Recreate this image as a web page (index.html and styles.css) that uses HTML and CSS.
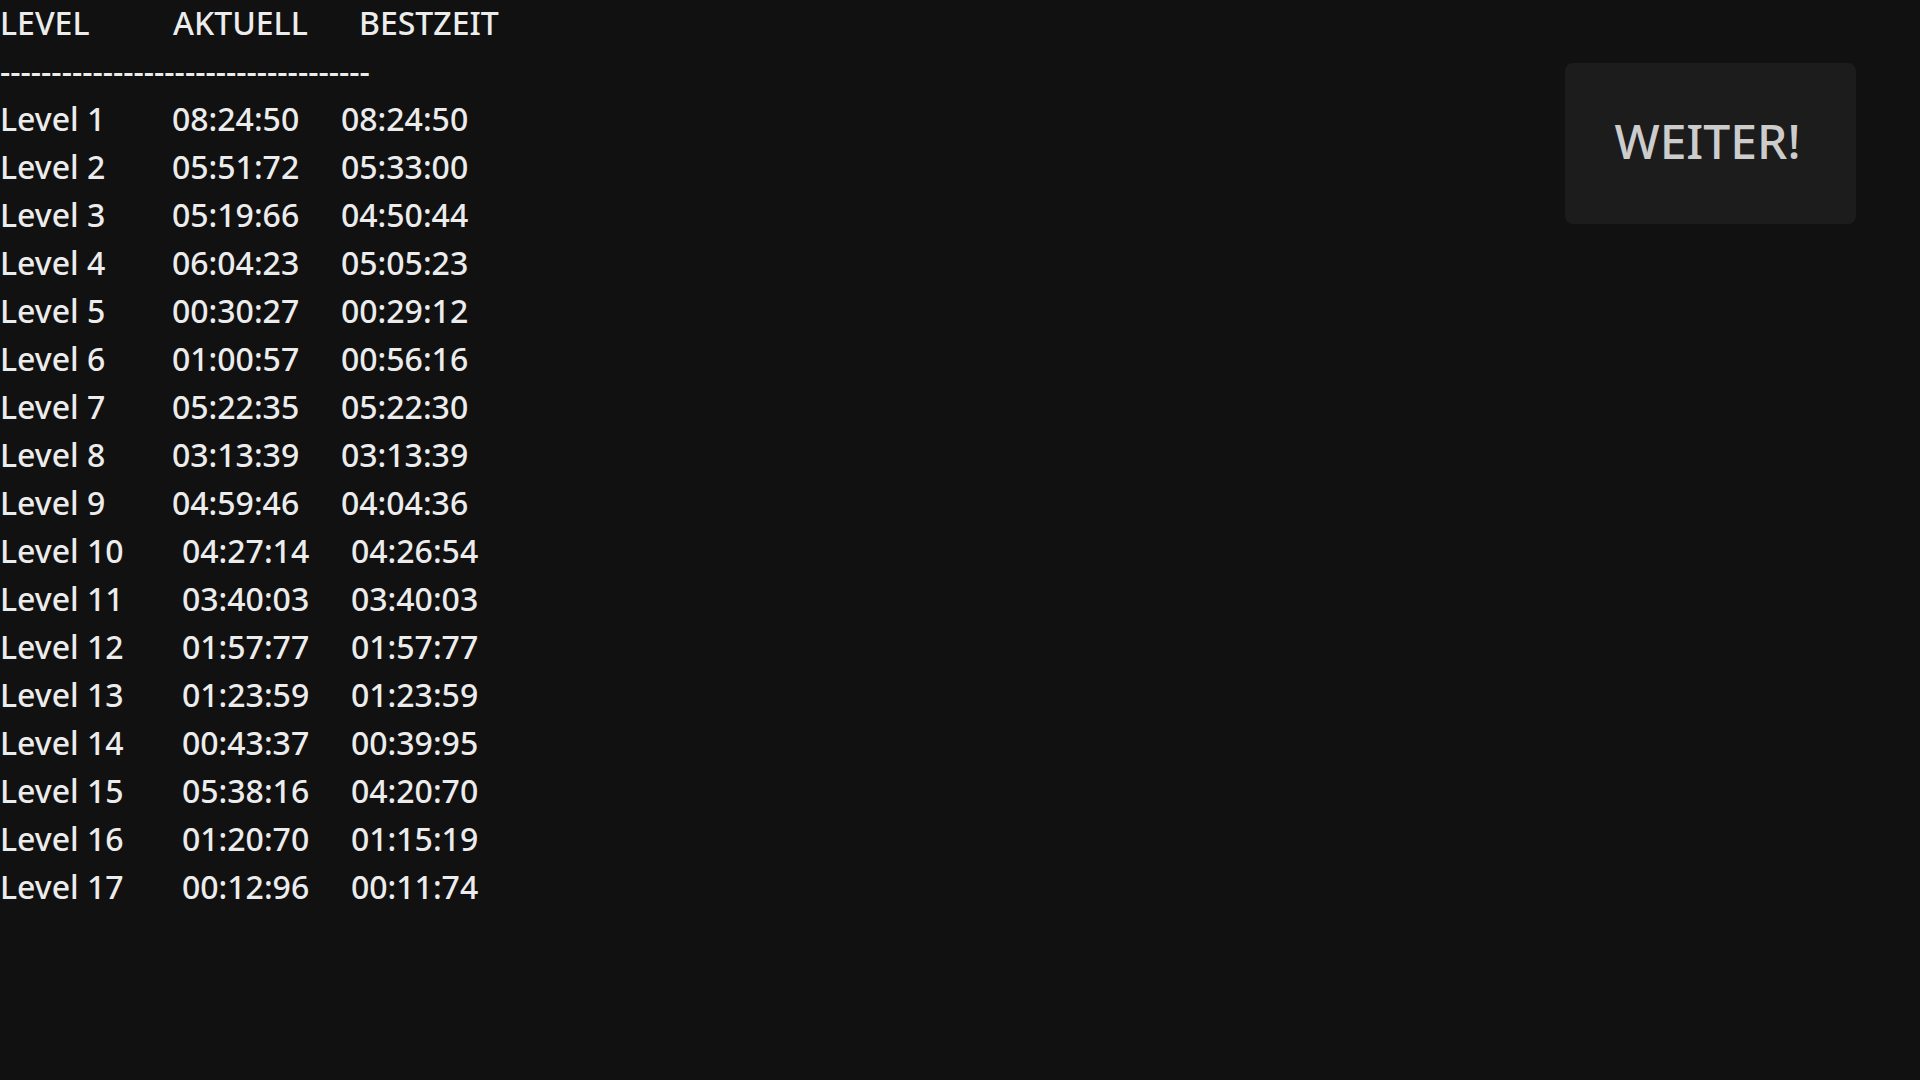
FILE: index.html
```html
<!DOCTYPE html>
<html lang="de">
<head>
<meta charset="utf-8">
<title>Zeiten</title>
<link rel="stylesheet" href="styles.css">
</head>
<body>
<div class="screen">
  <div class="table">
    <div class="row head"><span class="h1">LEVEL</span><span class="h2">AKTUELL</span><span>BESTZEIT</span></div>
    <div class="row sep">------------------------------------</div>
    <div class="row"><span class="c1">Level 1</span><span class="c2">08:24:50</span><span>08:24:50</span></div>
    <div class="row"><span class="c1">Level 2</span><span class="c2">05:51:72</span><span>05:33:00</span></div>
    <div class="row"><span class="c1">Level 3</span><span class="c2">05:19:66</span><span>04:50:44</span></div>
    <div class="row"><span class="c1">Level 4</span><span class="c2">06:04:23</span><span>05:05:23</span></div>
    <div class="row"><span class="c1">Level 5</span><span class="c2">00:30:27</span><span>00:29:12</span></div>
    <div class="row"><span class="c1">Level 6</span><span class="c2">01:00:57</span><span>00:56:16</span></div>
    <div class="row"><span class="c1">Level 7</span><span class="c2">05:22:35</span><span>05:22:30</span></div>
    <div class="row"><span class="c1">Level 8</span><span class="c2">03:13:39</span><span>03:13:39</span></div>
    <div class="row"><span class="c1">Level 9</span><span class="c2">04:59:46</span><span>04:04:36</span></div>
    <div class="row"><span class="c1 wide">Level 10</span><span class="c2">04:27:14</span><span>04:26:54</span></div>
    <div class="row"><span class="c1 wide">Level 11</span><span class="c2">03:40:03</span><span>03:40:03</span></div>
    <div class="row"><span class="c1 wide">Level 12</span><span class="c2">01:57:77</span><span>01:57:77</span></div>
    <div class="row"><span class="c1 wide">Level 13</span><span class="c2">01:23:59</span><span>01:23:59</span></div>
    <div class="row"><span class="c1 wide">Level 14</span><span class="c2">00:43:37</span><span>00:39:95</span></div>
    <div class="row"><span class="c1 wide">Level 15</span><span class="c2">05:38:16</span><span>04:20:70</span></div>
    <div class="row"><span class="c1 wide">Level 16</span><span class="c2">01:20:70</span><span>01:15:19</span></div>
    <div class="row"><span class="c1 wide">Level 17</span><span class="c2">00:12:96</span><span>00:11:74</span></div>
  </div>
  <button class="next">WEITER!</button>
</div>
</body>
</html>
```
FILE: styles.css
```css
html, body {
  margin: 0;
  padding: 0;
  background: #111111;
}
.screen {
  width: 1920px;
  height: 1080px;
  display: flex;
  justify-content: space-between;
  align-items: flex-start;
  font-family: "Noto Sans", "Open Sans", sans-serif;
  color: #ececec;
}
.table {
  margin-top: -1px;
  font-size: 32px;
  font-weight: 500;
  line-height: 48px;
}
.row {
  display: flex;
  white-space: pre;
}
.h1 { width: 173px; }
.h2 { width: 186px; }
.c1 { width: 172px; }
.c1.wide { width: 182px; }
.c2 { width: 169px; }
.next {
  margin: 63px 64px 0 0;
  width: 291px;
  height: 161px;
  border: none;
  border-radius: 8px;
  background: #1c1c1c;
  color: #cccccc;
  font-family: "Noto Sans", "Open Sans", sans-serif;
  font-size: 48px;
  font-weight: 500;
  padding: 0 6px 6px 0;
}
```
